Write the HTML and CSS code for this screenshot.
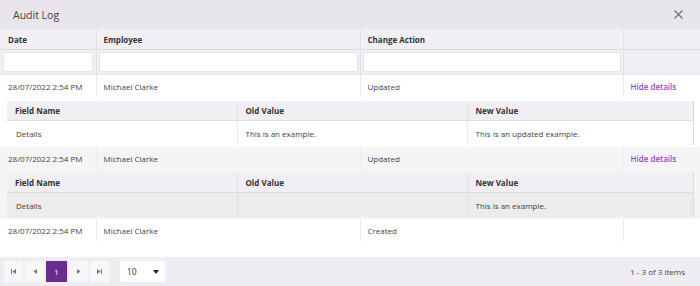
FILE: index.html
```html
<!DOCTYPE html>
<html lang="en">
  <head>
    <meta charset="UTF-8" />
    <title>Audit Log</title>
    <link rel="stylesheet" href="styles.css">
  </head>
  <body>
    <div class="window">
      <div class="titlebar">
        <span class="title">Audit Log</span>
        <span class="close">
          <svg width="9" height="9" viewBox="0 0 9 9">
            <path d="M0.5 0.5 L8.5 8.5 M8.5 0.5 L0.5 8.5" stroke="#6b6b6b" stroke-width="1.1" fill="none" />
          </svg>
        </span>
      </div>

      <table class="grid">
        <colgroup>
          <col class="col-date" />
          <col class="col-employee" />
          <col class="col-action" />
          <col class="col-command" />
        </colgroup>
        <thead>
          <tr class="head-row">
            <th>Date</th>
            <th>Employee</th>
            <th>Change Action</th>
            <th></th>
          </tr>
          <tr class="filter-row">
            <td><input type="text" /></td>
            <td><input type="text" /></td>
            <td><input type="text" /></td>
            <td></td>
          </tr>
        </thead>
        <tbody>
          <tr class="row">
            <td>28/07/2022 2:54 PM</td>
            <td>Michael Clarke</td>
            <td>Updated</td>
            <td><a class="toggle">Hide details</a></td>
          </tr>
          <tr class="detail-row">
            <td colspan="4">
              <table class="sub">
                <colgroup>
                  <col class="sub-col" />
                  <col class="sub-col" />
                  <col />
                </colgroup>
                <tr class="sub-head">
                  <th>Field Name</th>
                  <th>Old Value</th>
                  <th>New Value</th>
                </tr>
                <tr class="sub-row">
                  <td>Details</td>
                  <td>This is an example.</td>
                  <td>This is an updated example.</td>
                </tr>
              </table>
            </td>
          </tr>
          <tr class="row alt">
            <td>28/07/2022 2:54 PM</td>
            <td>Michael Clarke</td>
            <td>Updated</td>
            <td><a class="toggle">Hide details</a></td>
          </tr>
          <tr class="detail-row alt">
            <td colspan="4">
              <table class="sub">
                <colgroup>
                  <col class="sub-col" />
                  <col class="sub-col" />
                  <col />
                </colgroup>
                <tr class="sub-head">
                  <th>Field Name</th>
                  <th>Old Value</th>
                  <th>New Value</th>
                </tr>
                <tr class="sub-row shaded">
                  <td>Details</td>
                  <td></td>
                  <td>This is an example.</td>
                </tr>
              </table>
            </td>
          </tr>
          <tr class="row">
            <td>28/07/2022 2:54 PM</td>
            <td>Michael Clarke</td>
            <td>Created</td>
            <td></td>
          </tr>
        </tbody>
      </table>

      <div class="pager">
        <div class="pager-nav">
          <span class="page-btn">
            <svg width="5" height="5" viewBox="0 0 5 5"><path d="M0 0 H1 V5 H0 Z M5 0 V5 L1.5 2.5 Z" fill="#777" /></svg>
          </span>
          <span class="page-btn">
            <svg width="4" height="5" viewBox="0 0 4 5"><path d="M4 0 V5 L0.5 2.5 Z" fill="#777" /></svg>
          </span>
          <span class="page-btn current">1</span>
          <span class="page-btn">
            <svg width="4" height="5" viewBox="0 0 4 5"><path d="M0 0 V5 L3.5 2.5 Z" fill="#777" /></svg>
          </span>
          <span class="page-btn">
            <svg width="5" height="5" viewBox="0 0 5 5"><path d="M0 0 V5 L3.5 2.5 Z M4 0 H5 V5 H4 Z" fill="#777" /></svg>
          </span>
          <span class="page-size">
            <span>10</span>
            <svg width="6" height="4" viewBox="0 0 6 4"><path d="M0 0 H6 L3 4 Z" fill="#222" /></svg>
          </span>
        </div>
        <span class="pager-info">1 - 3 of 3 items</span>
      </div>
    </div>
  </body>
</html>
```

FILE: styles.css
```css
body {
  margin: 0;
  background: #fff;
  color: #3f3f3f;
  font-family: "Open Sans", "Noto Sans", sans-serif;
  font-size: 8px;
}

.window {
  width: 700px;
  height: 286px;
  display: flex;
  flex-direction: column;
  overflow: hidden;
}

.titlebar {
  height: 29px;
  flex: none;
  background: #e8e6ec;
  display: flex;
  align-items: center;
  justify-content: space-between;
  padding: 0 17px 0 13px;
}

.title {
  font-size: 10.5px;
  color: #444;
}

.close {
  display: flex;
  margin-top: -1px;
}

.grid {
  width: 700px;
  border-collapse: collapse;
  table-layout: fixed;
}

.col-date {
  width: 96px;
}

.col-employee {
  width: 264px;
}

.col-action {
  width: 263px;
}

.head-row th {
  height: 20px;
  padding: 0 7px 0 7px;
  background: #f1eff4;
  border-bottom: 1px solid #dedbe3;
  border-left: 1px solid #e2dfe6;
  text-align: left;
  font-weight: 700;
  color: #333;
}

.head-row th:first-child {
  padding-left: 8px;
}

.filter-row td {
  height: 24px;
  padding: 0 2px 0 2px;
  background: #f1eff4;
  border-left: 1px solid #e2dfe6;
  border-bottom: 1px solid #e6e3ea;
}

.filter-row td:first-child {
  padding: 0 3px;
}

.head-row th:first-child,
.filter-row td:first-child,
.row td:first-child {
  border-left: none;
}

input {
  display: block;
  width: 100%;
  height: 20px;
  box-sizing: border-box;
  border: 1px solid #e6e3ea;
  border-radius: 2px;
  background: #fff;
}

.row td {
  height: 22px;
  padding: 0 7px;
  border-left: 1px solid #ebebeb;
  white-space: nowrap;
}

.row td:first-child {
  padding-left: 8px;
}

.row.alt td,
.detail-row.alt > td {
  background: #f5f5f5;
}

.toggle {
  color: #9048d0;
  font-weight: 600;
}

.detail-row > td {
  height: 50px;
  padding: 4px 6px 2px 7px;
  box-sizing: border-box;
}

.sub {
  width: 100%;
  border-collapse: collapse;
  table-layout: fixed;
  border-right: 1px solid #d9d6de;
}

.sub-col {
  width: 230px;
}

.sub-head th {
  height: 19px;
  padding: 0 8px;
  background: #f1eff4;
  border-bottom: 1px solid #dedbe3;
  border-left: 1px solid #e2dfe6;
  text-align: left;
  font-weight: 700;
  color: #333;
}

.sub-row td {
  height: 24px;
  padding: 0 8px 0 9px;
  background: #fff;
  border-left: 1px solid #ebebeb;
}

.sub-row td + td {
  padding-left: 8px;
}

.sub-row.shaded td {
  background: #ececec;
  border-left-color: #e0e0e0;
}

.sub-head th:first-child,
.sub-row td:first-child {
  border-left: none;
}

.pager {
  margin-top: auto;
  height: 29px;
  flex: none;
  background: #efedf2;
  display: flex;
  align-items: center;
  justify-content: space-between;
  padding: 0 15px 0 4px;
}

.pager-nav {
  display: flex;
  align-items: center;
  gap: 2px;
}

.page-btn {
  width: 19px;
  height: 21px;
  background: #f7f7f7;
  display: flex;
  align-items: center;
  justify-content: center;
  color: #555;
}

.page-btn.current {
  width: 21px;
  background: #6a2c91;
  color: #fff;
}

.page-size {
  margin-left: 9px;
  width: 45px;
  height: 21px;
  box-sizing: border-box;
  padding: 0 6px 0 7px;
  background: #fff;
  border-radius: 2px;
  display: flex;
  align-items: center;
  justify-content: space-between;
  color: #333;
  font-size: 8.5px;
}

.pager-info {
  color: #444;
}
```
